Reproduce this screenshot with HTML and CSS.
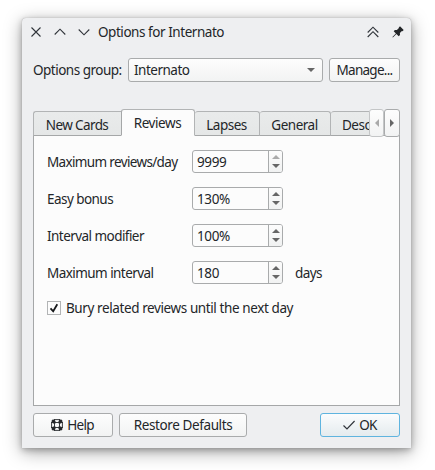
FILE: index.html
```html
<!DOCTYPE html>
<html lang="en">
<head>
<meta charset="utf-8">
<title>Options for Internato</title>
<link rel="stylesheet" href="styles.css">
</head>
<body>
<main class="window">
  <header class="titlebar">
    <svg class="tb" viewBox="0 0 12 12"><path d="M1.5 1.5l9 9M10.5 1.5l-9 9"/></svg>
    <svg class="tb" viewBox="0 0 12 12"><path d="M.7 8.5L6 3.2l5.3 5.3"/></svg>
    <svg class="tb" viewBox="0 0 12 12"><path d="M.7 3.5L6 8.8l5.3-5.3"/></svg>
    <h1 class="title">Options for Internato</h1>
    <svg class="tb double" viewBox="0 0 12 12"><path d="M.7 6.500L6 1.200l5.300 5.300M.7 11L6 5.700l5.300 5.300"/></svg>
    <svg class="tb pin" viewBox="0 0 12 12"><path d="M8 .3l3.700 3.700-1.200 1.200-.6-.1-2 2 .1 2-1.300 1.200-2.300-2.300L.9 11.600l-.5-.5L3.900 7.500 1.700 5.300l1.200-1.300 2 .1 2-2L6.800 1.500z"/></svg>
  </header>

  <section class="group">
    <label class="group-label">Options group:</label>
    <div class="box combo">Internato<svg class="arrow" viewBox="0 0 8 4"><path d="M0 0h8L4 4z"/></svg></div>
    <button class="box manage">Manage...</button>
  </section>

  <nav class="tabs">
    <div class="tab new">New Cards</div>
    <div class="tab active">Reviews</div>
    <div class="tab lapses">Lapses</div>
    <div class="tab general">General</div>
    <div class="tab desc">Description</div>
    <button class="box scroll off" aria-label="Previous"><svg viewBox="0 0 4 8"><path d="M4 0v8L0 4z"/></svg></button>
    <button class="box scroll last" aria-label="Next"><svg viewBox="0 0 4 8"><path d="M0 0v8l4-4z"/></svg></button>
  </nav>

  <section class="pane">
    <div class="row"><label class="long">Maximum reviews/day</label><div class="box spin">9999<i><svg class="off" viewBox="0 0 8 4"><path d="M0 4h8L4 0z"/></svg><svg viewBox="0 0 8 4"><path d="M0 0h8L4 4z"/></svg></i></div></div>
    <div class="row"><label>Easy bonus</label><div class="box spin">130%<i><svg viewBox="0 0 8 4"><path d="M0 4h8L4 0z"/></svg><svg viewBox="0 0 8 4"><path d="M0 0h8L4 4z"/></svg></i></div></div>
    <div class="row"><label>Interval modifier</label><div class="box spin">100%<i><svg viewBox="0 0 8 4"><path d="M0 4h8L4 0z"/></svg><svg viewBox="0 0 8 4"><path d="M0 0h8L4 4z"/></svg></i></div></div>
    <div class="row"><label>Maximum interval</label><div class="box spin">180<i><svg viewBox="0 0 8 4"><path d="M0 4h8L4 0z"/></svg><svg viewBox="0 0 8 4"><path d="M0 0h8L4 4z"/></svg></i></div><span class="unit">days</span></div>
    <div class="check"><div class="tick"><svg viewBox="0 0 12 12"><path d="M2.500 6.300l2.700 3L9.300 2.300"/></svg></div>Bury related reviews until the next day</div>
  </section>

  <footer class="buttons">
    <button class="box help"><svg class="ring" viewBox="0 0 12 12"><path d="M3.500.600h5M3.500 11.400h5M3.500 0v12M8.500 0v12M0 3.500h12M0 8.500h12M.6 3.500v5M11.400 3.500v5"/><path class="corner" d="M.3 2l1.700-1.700L4.500 2v2.500H2zM11.700 2L10 .3 7.500 2v2.500H10zM.3 10L2 11.700 4.500 10V7.500H2zM11.700 10L10 11.700 7.500 10V7.500H10z"/></svg>Help</button>
    <button class="box restore">Restore Defaults</button>
    <button class="box ok"><svg class="okmark" viewBox="0 0 12 10"><path d="M.5 5.500l3.500 3.500L11.600 1"/></svg>OK</button>
  </footer>
</main>
</body>
</html>
```
FILE: styles.css
```css
* { box-sizing: border-box; }
body {
  margin: 0;
  padding: 18px 24px 22px 22px;
  height: 470px;
  background: #fff;
  overflow: hidden;
  color: #232629;
  font: 13.5px/20px "Noto Sans", "Open Sans", sans-serif;
  letter-spacing: -.4px;
  white-space: nowrap;
}
.window {
  display: flex;
  flex-direction: column;
  width: 389px;
  height: 430px;
  padding: 0 11px;
  background: #eeeff1;
  border-radius: 4px 4px 0 0;
  box-shadow: 0 0 1px 0 #999, 0 4px 18px rgba(0,0,0,.35), 0 2px 6px rgba(0,0,0,.25);
}
svg { display: block; fill: #666; flex: none; }
button { font: inherit; letter-spacing: inherit; color: inherit; padding: 0; }
h1 { margin: 0; font: inherit; }

.titlebar { display: flex; align-items: center; height: 28px; margin: 0 -3px; }
.tb { width: 12px; height: 12px; margin-right: 12px; fill: none; stroke: #30343a; stroke-width: 1.1; }
.title { flex: 1; margin-left: -4px; letter-spacing: -.45px; }
.double { margin-right: 13px; }
.pin { margin-right: -1px; fill: #232629; stroke: none; }

.box {
  display: flex;
  align-items: center;
  height: 24px;
  border: 1px solid #a9abac;
  border-radius: 3px;
  background: linear-gradient(#fdfdfd, #f2f3f3);
}
.group { display: flex; height: 24px; margin-top: 12px; }
.group-label { width: 95px; padding-top: 2px; letter-spacing: -.5px; }
.combo { width: 195px; padding: 0 7px 0 5px; justify-content: space-between; letter-spacing: -.5px; }
.arrow { width: 8px; height: 4px; }
.manage { width: 71px; margin-left: 6px; justify-content: center; letter-spacing: -.75px; }

.tabs { display: flex; align-items: flex-end; height: 27px; margin-top: 27px; position: relative; z-index: 1; letter-spacing: -.5px; }
.tab {
  height: 25px;
  border: 1px solid #b2b4b5;
  border-bottom-color: #a5a7a8;
  border-left: 0;
  border-radius: 3px 3px 0 0;
  background: linear-gradient(#e9ebeb, #e5e7e7);
  text-align: center;
  padding-top: 3px;
  overflow: hidden;
}
.new { width: 88px; padding-right: 1px; border-left: 1px solid #b2b4b5; border-right: 0; border-top-right-radius: 0; letter-spacing: -.6px; }
.active { width: 74px; height: 27px; padding-right: 1px; background: #fcfcfc; border-left: 1px solid #a5a7a8; border-bottom-color: #fcfcfc; letter-spacing: -.4px; }
.lapses { width: 65px; padding-right: 1px; }
.general { width: 71px; padding-right: 1px; }
.desc { width: 38px; padding-left: 11px; text-align: left; border-right: 0; border-radius: 3px 0 0; }
.scroll { width: 15px; height: 28px; margin-bottom: -1px; justify-content: center; }
.scroll.off { border-color: #c4c6c7; }
.last { width: 16px; }
.scroll svg { width: 4px; height: 8px; }
.off svg, svg.off { fill: #aaa; }

.pane {
  height: 271px;
  margin-top: -1px;
  padding: 14px 13px;
  border: 1px solid #a5a7a8;
  background: #fcfcfc;
}
.row { display: flex; height: 23px; margin-bottom: 14px; }
.row label { width: 145px; padding-top: 2px; letter-spacing: -.55px; }
.row .long { letter-spacing: -.65px; }
.spin { width: 91px; height: 23px; padding-left: 4px; background: #fcfcfc; justify-content: space-between; }
.spin i {
  display: flex;
  flex-direction: column;
  align-items: center;
  justify-content: center;
  gap: 5px;
  width: 14px;
  height: 21px;
  border-left: 1px solid #a9abac;
  border-radius: 0 2px 2px 0;
  background: linear-gradient(#fcfcfc, #f1f2f2);
}
.spin svg { width: 8px; height: 4px; }
.unit { padding: 2px 0 0 12px; letter-spacing: -.6px; }
.check { display: flex; align-items: center; height: 20px; margin-top: 1px; }
.tick { width: 14px; height: 14px; border: 1px solid #b2b4b5; margin-right: 5px; }
.tick svg { width: 12px; height: 12px; fill: none; stroke: #16181a; stroke-width: 1.8; }

.buttons { display: flex; gap: 6px; margin-top: 7px; }
.buttons .box { justify-content: center; }
.help { width: 80px; gap: 4px; padding-right: 1px; letter-spacing: -.7px; }
.ring { width: 12px; height: 12px; fill: none; stroke: #232629; stroke-width: .9; }
.ring .corner { fill: #232629; stroke: none; }
.restore { width: 128px; }
.buttons .ok { width: 80px; margin-left: auto; gap: 4px; letter-spacing: -.8px; border-color: #5fb4df; background: linear-gradient(#fbfcfd, #e4ebee); }
.okmark { width: 12px; height: 10px; fill: none; stroke: #30343a; stroke-width: 1.2; }
```
